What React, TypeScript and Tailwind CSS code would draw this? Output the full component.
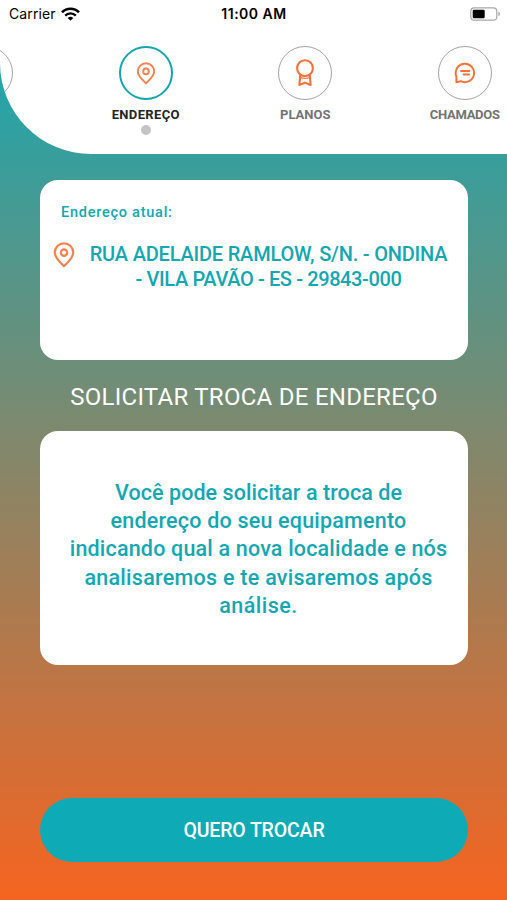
import { clsx } from "clsx";

const MapPin = ({ className }: { className?: string }) => (
  <svg viewBox="0 0 22 26" className={className} fill="none" stroke="#f4824f" strokeWidth="2.2" strokeLinejoin="round">
    <path d="M11 24.2C7.6 20.6 1.8 16 1.8 10.6a9.2 9.2 0 0 1 18.4 0c0 5.4-5.8 10-9.2 13.6Z" />
    <circle cx="11" cy="10.6" r="3.2" />
  </svg>
);

const Award = ({ className }: { className?: string }) => (
  <svg viewBox="0 0 20 28" className={className} fill="none" stroke="#f4733c" strokeWidth="2.1" strokeLinejoin="round">
    <circle cx="10" cy="9.2" r="7.9" />
    <path d="M5.2 15.8 4.4 26l5.6-2.4 5.6 2.4-.8-10.2" />
    <path d="M5 18.6c3 1 7 1 10 0" strokeWidth="1.1" />
  </svg>
);

const Chat = ({ className }: { className?: string }) => (
  <svg viewBox="0 0 22 22" className={className} fill="none" stroke="#f4733c" strokeWidth="2" strokeLinecap="round" strokeLinejoin="round">
    <path d="M2.4 20.2V14.5A9.2 9.2 0 1 1 6.800 19.200Z" />
    <path d="M7 9h8.3M9.5 12.5h5.8" strokeWidth="1.9" />
  </svg>
);

const Wifi = () => (
  <svg viewBox="0 0 19 14" className="h-[14px] w-[19px]" fill="none" stroke="#000" strokeWidth="2.6">
    <path d="M1 5.3a12 12 0 0 1 17 0" />
    <path d="M4.2 8.6a7.5 7.5 0 0 1 10.6 0" strokeWidth="2.3" />
    <path d="M9.5 13.8 6.7 11a4 4 0 0 1 5.6 0Z" fill="#000" stroke="none" />
  </svg>
);

const Battery = () => (
  <svg viewBox="0 0 31 14" className="h-[14px] w-[31px]">
    <rect x="0.8" y="0.8" width="26" height="12.4" rx="3.5" fill="none" stroke="#a8a8a8" strokeWidth="1.2" />
    <rect x="2.7" y="2.7" width="12" height="8.6" rx="1.3" fill="#000" />
    <path d="M28.3 4.8c2.2.6 2.2 3.8 0 4.4Z" fill="#a8a8a8" />
  </svg>
);

const tabs = [
  { id: "home" },
  { id: "address", label: "ENDEREÇO", icon: MapPin, size: "h-[23px] w-[20px]", spacing: "tracking-[0.35px]", active: true },
  { id: "plans", label: "PLANOS", icon: Award, size: "h-[28px] w-[20px]", spacing: "tracking-[0px]" },
  { id: "tickets", label: "CHAMADOS", icon: Chat, size: "h-[22px] w-[22px]", spacing: "tracking-[-0.3px]" },
];

const addressLines = [
  { text: "RUA ADELAIDE RAMLOW, S/N. - ONDINA", spacing: "tracking-[-0.2px]" },
  { text: "- VILA PAVÃO - ES - 29843-000", spacing: "tracking-[-0.38px]" },
];

const messageLines = [
  { text: "Você pode solicitar a troca de", spacing: "tracking-[0.07px]" },
  { text: "endereço do seu equipamento", spacing: "tracking-[0.2px]" },
  { text: "indicando qual a nova localidade e nós", spacing: "tracking-[0.18px]" },
  { text: "analisaremos e te avisaremos após", spacing: "tracking-[0.27px]" },
  { text: "análise.", spacing: "tracking-[0.5px]" },
];

function StatusBar() {
  return (
    <div className="grid h-[27px] grid-cols-3 items-center pl-[9px] pr-[6px] font-[Inter,sans-serif] text-black">
      <div className="flex items-center gap-[5px] text-[14px] leading-none tracking-[0.1px]">
        <span>Carrier</span>
        <Wifi />
      </div>
      <span className="-ml-[2px] text-center text-[14px] font-semibold leading-none tracking-[0.5px]">11:00 AM</span>
      <div className="flex justify-end">
        <Battery />
      </div>
    </div>
  );
}

function Tabs() {
  return (
    <nav className="-ml-[93.5px] flex w-[638px] pt-[19px]">
      {tabs.map((tab) => (
        <div key={tab.id} className="flex w-[159.5px] shrink-0 flex-col items-center">
          <div
            className={clsx(
              "flex h-[54px] w-[54px] items-center justify-center rounded-full",
              tab.active ? "border-2 border-[#14a5af]" : "border border-[#a3a3a3]"
            )}
          >
            {tab.icon && <tab.icon className={tab.size} />}
          </div>
          <span
            className={clsx(
              "mt-[8px] whitespace-nowrap text-[13px] font-bold leading-[14px]",
              tab.spacing,
              tab.active ? "text-[#242424]" : "text-[#737373]"
            )}
          >
            {tab.label}
          </span>
          {tab.active && <span className="mt-[3px] h-[10px] w-[10px] rounded-full bg-[#c4c4c4]" />}
        </div>
      ))}
    </nav>
  );
}

export default function App() {
  return (
    <div className="flex h-[900px] w-[507px] flex-col overflow-hidden bg-[linear-gradient(to_bottom,#10abb6,#f56420)] font-[Roboto,sans-serif]">
      <header className="h-[153.5px] shrink-0 overflow-hidden rounded-bl-[91px] bg-white">
        <StatusBar />
        <Tabs />
      </header>

      <main className="flex flex-1 flex-col pl-[40px] pr-[39px] pt-[26px]">
        <section className="h-[180px] rounded-[18px] bg-white pt-[24px] text-[#14a7b2]">
          <h2 className="pl-[21px] text-[14.5px] font-medium leading-[18px] tracking-[0.75px]">Endereço atual:</h2>
          <div className="mt-[20px] flex pl-[13px] pr-[20px]">
            <MapPin className="h-[26px] w-[22px] shrink-0" />
            <p className="flex flex-1 flex-col items-center pl-[14px] text-[20px] font-medium leading-[25px]">
              {addressLines.map((line) => (
                <span key={line.text} className={clsx("whitespace-nowrap", line.spacing)}>{line.text}</span>
              ))}
            </p>
          </div>
        </section>

        <h1 className="mt-[22px] whitespace-nowrap text-center text-[24px] leading-[30px] tracking-[0.27px] text-white">
          SOLICITAR TROCA DE ENDEREÇO
        </h1>

        <section className="mt-[19px] h-[234.5px] rounded-[18px] bg-white pt-[48px] text-[#14a7b2]">
          <p className="flex flex-col items-center pl-[9px] text-[21.5px] font-medium leading-[28.4px]">
            {messageLines.map((line) => (
              <span key={line.text} className={clsx("whitespace-nowrap", line.spacing)}>{line.text}</span>
            ))}
          </p>
        </section>

        <button className="mt-[133px] h-[64px] rounded-full bg-[#0eabb7] pt-[2px] text-[19.5px] font-medium tracking-[-0.15px] text-white">
          QUERO TROCAR
        </button>
      </main>
    </div>
  );
}
